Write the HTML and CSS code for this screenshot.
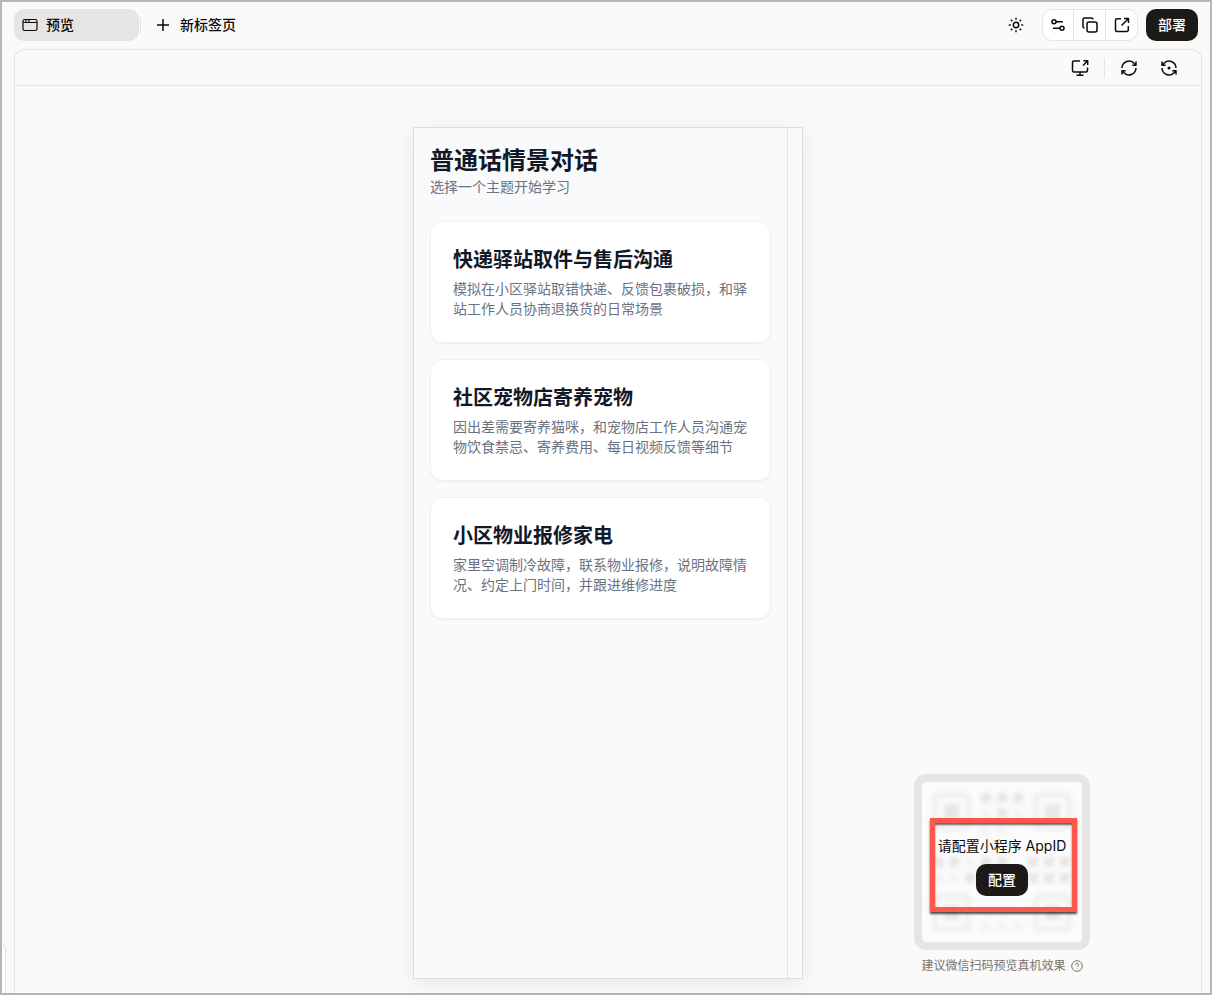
FILE: index.html
```html
<!DOCTYPE html>
<html lang="zh-CN">
<head>
    <meta charset="UTF-8">
    <meta name="viewport" content="width=device-width, initial-scale=1.0">
    <title>预览</title>
    <link rel="stylesheet" href="styles.css">
</head>
<body>
    <div class="window">
        <header class="topbar">
            <button class="tab" type="button">
                <svg class="icon icon-thin" viewBox="0 0 16 16"><rect x="1" y="2.500" width="14" height="11" rx="1.800"/><path d="M1 5.500h14M4 2.500v3M7 2.500v3"/></svg>
                <span>预览</span>
            </button>
            <span class="tab-line"></span>
            <button class="new-tab" type="button">
                <svg class="icon" viewBox="0 0 16 16"><path d="M8 2v12M2 8h12"/></svg>
                <span>新标签页</span>
            </button>

            <div class="actions">
                <button class="icon-btn" type="button" aria-label="主题">
                    <svg class="icon" viewBox="0 0 16 16"><circle cx="8" cy="8" r="2.700"/><path d="M8 .8v1.900M8 13.300v1.900M.8 8h1.900M13.300 8h1.900M2.900 2.900l1.400 1.400M11.700 11.700l1.400 1.400M2.900 13.100l1.400-1.400M11.700 4.300l1.400-1.400"/></svg>
                </button>
                <div class="btn-group">
                    <button type="button" aria-label="设置">
                        <svg class="icon" viewBox="0 0 16 16"><circle cx="4" cy="4.700" r="2"/><path d="M6 4.700h7M3 11.300h7"/><circle cx="12" cy="11.300" r="2"/></svg>
                    </button>
                    <button type="button" aria-label="复制">
                        <svg class="icon" viewBox="0 0 16 16"><rect x="5" y="5" width="10" height="10" rx="2"/><path d="M2.500 11A1.500 1.500 0 0 1 1 9.500V2.500A1.500 1.500 0 0 1 2.500 1h7A1.500 1.500 0 0 1 11 2.500"/></svg>
                    </button>
                    <button type="button" aria-label="打开">
                        <svg class="icon" viewBox="0 0 16 16"><path d="M7 1.700H3A1.500 1.500 0 0 0 1.500 3.200v9.800A1.500 1.500 0 0 0 3 14.500h9.800a1.500 1.500 0 0 0 1.500-1.500V9M10 1.500h4.500V6M14.300 1.700L7.500 8.500"/></svg>
                    </button>
                </div>
                <button class="dark-btn" type="button"><span>部署</span></button>
            </div>
        </header>

        <main class="panel">
            <div class="toolbar">
                <button class="icon-btn" type="button" aria-label="设备">
                    <svg class="icon icon-lg" viewBox="0 0 18 18"><path d="M9 2H3a1.500 1.500 0 0 0-1.500 1.500v8A1.500 1.500 0 0 0 3 13h12a1.500 1.500 0 0 0 1.500-1.500V8.500M9 13v3M5.500 16.300h7M12.500 1.700h4.200v4.200M16.500 2L12 6.500"/></svg>
                </button>
                <span class="toolbar-line"></span>
                <button class="icon-btn" type="button" aria-label="刷新">
                    <svg class="icon" viewBox="0 0 16 16"><path d="M1 8a7 7 0 0 1 12.300-4.500L15 5.200M15 1.500v3.700h-3.700M15 8a7 7 0 0 1-12.300 4.500L1 10.800M1 14.500v-3.700h3.700"/></svg>
                </button>
                <button class="icon-btn" type="button" aria-label="重置">
                    <svg class="icon" viewBox="0 0 16 16"><path d="M15 8A7 7 0 0 0 2.700 3.500L1 5.200M1 1.500v3.700h3.700M1 8a7 7 0 0 0 12.300 4.500l1.700-1.700M15 14.500v-3.700h-3.700"/><circle class="fill" cx="8" cy="8" r="1.500"/></svg>
                </button>
            </div>

            <div class="stage">
                <div class="phone">
                    <div class="screen">
                        <h1>普通话情景对话</h1>
                        <p class="subtitle">选择一个主题开始学习</p>
                        <div class="topics">
                            <article class="card">
                                <h2>快递驿站取件与售后沟通</h2>
                                <p>模拟在小区驿站取错快递、反馈包裹破损，和驿站工作人员协商退换货的日常场景</p>
                            </article>
                            <article class="card">
                                <h2>社区宠物店寄养宠物</h2>
                                <p>因出差需要寄养猫咪，和宠物店工作人员沟通宠物饮食禁忌、寄养费用、每日视频反馈等细节</p>
                            </article>
                            <article class="card">
                                <h2>小区物业报修家电</h2>
                                <p>家里空调制冷故障，联系物业报修，说明故障情况、约定上门时间，并跟进维修进度</p>
                            </article>
                        </div>
                    </div>
                </div>

                <aside class="scan">
                    <div class="qr">
                        <svg class="qr-code" viewBox="0 0 160 160">
                            <g class="finder">
                                <rect x="13" y="13" width="33" height="33" rx="3"/>
                                <rect x="114" y="13" width="33" height="33" rx="3"/>
                                <rect x="13" y="114" width="33" height="33" rx="3"/>
                                <rect x="114" y="114" width="33" height="33" rx="3"/>
                            </g>
                            <g class="dots">
                                <path d="M22 22h15v15h-15zM123 22h15v15h-15zM22 123h15v15h-15zM123 123h15v15h-15z"/>
                                <path d="M59 11h10v10h-10zM75 11h10v10h-10zM91 11h10v10h-10zM75 26h10v10h-10z"/>
                                <path d="M12 75h10v10h-10zM27 75h10v10h-10zM59 75h10v10h-10zM75 75h10v10h-10zM106 75h10v10h-10zM122 75h10v10h-10zM138 75h10v10h-10z"/>
                                <path d="M43 91h10v10h-10zM59 91h10v10h-10zM91 91h10v10h-10zM106 91h10v10h-10zM122 91h10v10h-10zM138 91h10v10h-10z"/>
                            </g>
                            <g class="dots faint">
                                <path d="M59 43h10v10h-10zM59 27h10v10h-10zM91 27h10v10h-10zM75 43h10v10h-10zM43 75h10v10h-10zM12 91h10v10h-10zM27 91h10v10h-10z"/>
                                <path d="M59 123h10v10h-10zM75 123h10v10h-10zM59 139h10v10h-10zM75 139h10v10h-10zM91 139h10v10h-10z"/>
                            </g>
                        </svg>
                        <div class="qr-mask">
                            <p>请配置小程序 AppID</p>
                            <button class="dark-btn" type="button"><span>配置</span></button>
                        </div>
                        <div class="highlight"></div>
                    </div>
                    <p class="scan-tip">
                        建议微信扫码预览真机效果
                        <svg class="icon icon-sm" viewBox="0 0 12 12"><circle cx="6" cy="6" r="5.300"/><path d="M4.500 4.800a1.500 1.500 0 1 1 2.200 1.300c-.5.300-.7.500-.7 1M6 8.300v.6"/></svg>
                    </p>
                </aside>
            </div>
        </main>
        <div class="drawer-edge"></div>
    </div>
</body>
</html>
```
FILE: styles.css
```css
* {
    box-sizing: border-box;
}
body {
    margin: 0;
    background: #fafaf9;
    color: #0c0a09;
    font-family: Inter, "Noto Sans CJK SC", sans-serif;
    font-size: 14px;
}
h1, h2, p {
    margin: 0;
}
button {
    display: flex;
    align-items: center;
    justify-content: center;
    border: 0;
    padding: 0;
    background: none;
    color: inherit;
    font: inherit;
    font-weight: 500;
    cursor: pointer;
}
button span {
    padding-bottom: 2px;
}
.window {
    position: relative;
    display: flex;
    flex-direction: column;
    min-height: 100vh;
    padding: 7px 8px 0 12px;
    border: 2px solid #b4b6b9;
}
.icon {
    width: 16px;
    height: 16px;
    flex: none;
    fill: none;
    stroke: currentColor;
    stroke-width: 1.5;
    stroke-linejoin: round;
}
.icon-thin {
    stroke-width: 1.2;
}
.icon-lg {
    width: 18px;
    height: 18px;
}
.icon-sm {
    width: 12px;
    height: 12px;
    stroke-width: 1;
}
.icon .fill {
    fill: currentColor;
    stroke: none;
}

/* top bar */
.topbar {
    display: flex;
    align-items: center;
    height: 32px;
    padding-right: 4px;
}
.tab {
    justify-content: flex-start;
    gap: 8px;
    width: 125px;
    height: 32px;
    padding: 0 8px;
    border-radius: 10px;
    background: #e7e5e4;
}
.tab-line {
    width: 1px;
    height: 16px;
    margin-left: 1px;
    background: #e7e5e4;
}
.new-tab {
    gap: 9px;
    height: 32px;
    padding: 0 14px;
}
.actions {
    display: flex;
    align-items: center;
    gap: 8px;
    margin-left: auto;
}
.icon-btn {
    width: 36px;
    height: 32px;
}
.btn-group {
    display: flex;
    height: 32px;
    border: 1px solid #e7e5e4;
    border-radius: 10px;
    background: #fff;
}
.btn-group button {
    width: 30px;
}
.btn-group button + button {
    width: 32px;
    border-left: 1px solid #e7e5e4;
}
.dark-btn {
    width: 52px;
    height: 32px;
    border-radius: 10px;
    background: #1c1917;
    color: #fff;
}

/* preview panel */
.panel {
    display: flex;
    flex: 1;
    flex-direction: column;
    margin-top: 8px;
    border: 1px solid #e5e5e5;
    border-bottom: 0;
    border-radius: 10px 10px 0 0;
}
.toolbar {
    display: flex;
    align-items: center;
    justify-content: flex-end;
    gap: 4px;
    height: 36px;
    padding-right: 14px;
    border-bottom: 1px solid #e5e5e5;
}
.toolbar-line {
    width: 1px;
    height: 20px;
    margin: 0 2px;
    background: #e5e5e5;
}
.stage {
    position: relative;
    display: flex;
    flex: 1;
    justify-content: center;
    padding: 41px 0 14px;
}
.phone {
    display: flex;
    width: 390px;
    padding-right: 14px;
    border: 1px solid #dedede;
    background: #fafafa;
    box-shadow: 0 4px 20px rgba(0, 0, 0, 0.08);
}
.screen {
    flex: 1;
    padding: 17px 16px;
    border-right: 1px solid #e2e4e8;
    background: #f9fafc;
    color: #111827;
}
.screen h1 {
    font-size: 24px;
    line-height: 32px;
}
.subtitle {
    color: #6b7280;
    line-height: 20px;
}
.topics {
    display: flex;
    flex-direction: column;
    gap: 16px;
    margin-top: 24px;
}
.card {
    padding: 25px 22px 23px;
    border: 1px solid #f0f1f4;
    border-radius: 12px;
    background: #fff;
    box-shadow: 0 1px 1px rgba(0, 0, 0, 0.04);
}
.card h2 {
    margin-bottom: 6px;
    font-size: 20px;
    line-height: 26px;
}
.card p {
    color: #6b7280;
    line-height: 20px;
}

/* scan box floats over the stage */
.scan {
    position: absolute;
    right: 111px;
    bottom: 19px;
    display: flex;
    flex-direction: column;
    align-items: center;
}
.qr {
    position: relative;
    width: 176px;
    height: 176px;
    border: 8px solid #e7e5e4;
    border-radius: 12px;
    background: #fbfbfb;
}
.qr-code {
    display: block;
    filter: blur(2px);
}
.finder {
    fill: none;
    stroke: #efeeed;
    stroke-width: 5;
}
.dots {
    fill: #e8e7e6;
}
.faint {
    fill: #f3f3f2;
}
.qr-mask {
    position: absolute;
    inset: 0;
    display: flex;
    flex-direction: column;
    align-items: center;
    justify-content: center;
    gap: 8px;
    padding-top: 8px;
    white-space: nowrap;
}
.qr-mask p {
    line-height: 20px;
}
.highlight {
    position: absolute;
    inset: 36px 5px 30px 8px;
    border: 5px solid #fd584b;
    box-shadow: 0 2px 2px rgba(0, 0, 0, 0.7), inset 0 2px 2px rgba(0, 0, 0, 0.6);
    pointer-events: none;
}
.scan-tip {
    display: flex;
    align-items: center;
    gap: 5px;
    margin-top: 8px;
    color: #78716c;
    font-size: 12px;
    line-height: 16px;
}
.drawer-edge {
    position: absolute;
    bottom: 0;
    left: 0;
    width: 4px;
    height: 48px;
    border: 1px solid #e5e0e0;
    border-width: 1px 1px 0 0;
    border-radius: 0 6px 0 0;
    background: #fff;
}
```
